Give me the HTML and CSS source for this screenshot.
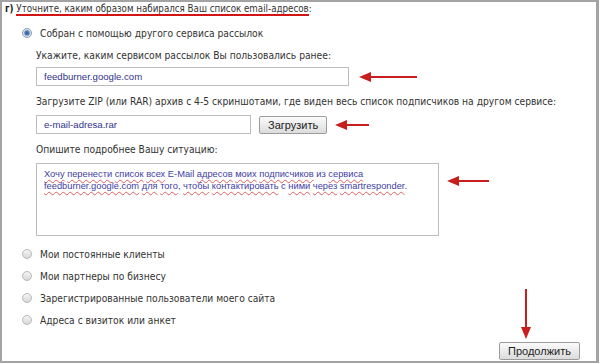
FILE: index.html
```html
<!DOCTYPE html>
<html lang="ru">
<head>
  <meta charset="UTF-8">
  <title>Список email-адресов</title>
  <link rel="stylesheet" href="styles.css">
</head>
<body>
  <div class="frame">
    <div class="title"><b>г)</b> <span class="marked">Уточните, каким образом набирался Ваш список email-адресов</span>:</div>

    <div class="option first"><span class="radio checked"></span>Собран с помощью другого сервиса рассылок</div>

    <div class="sub">
      <div class="label first">Укажите, каким сервисом рассылок Вы пользовались ранее:</div>
      <div class="row">
        <div class="field wide">feedburner.google.com</div>
        <svg class="arrow" width="58" height="12" viewBox="0 0 58 12"><path d="M10 5h48v2H10z M0 6l12-5v10z" fill="#c81e1e"/></svg>
      </div>

      <div class="label">Загрузите ZIP (или RAR) архив с 4-5 скриншотами, где виден весь список подписчиков на другом сервисе:</div>
      <div class="row">
        <div class="field short">e-mail-adresa.rar</div>
        <button class="btn">Загрузить</button>
        <svg class="arrow" width="34" height="12" viewBox="0 0 34 12"><path d="M10 5h24v2H10z M0 6l12-5v10z" fill="#c81e1e"/></svg>
      </div>

      <div class="label">Опишите подробнее Вашу ситуацию:</div>
      <div class="row top">
        <div class="area"><u>Хочу</u> <u>перенести</u> <u>список</u> <u>всех</u> E-Mail <u>адресов</u> <u>моих</u> <u>подписчиков</u> из <u>сервиса</u><br><u>feedburner.google.com</u> <u>для</u> <u>того</u>, <u>чтобы</u> <u>контактировать</u> с <u>ними</u> <u>через</u> <u>smartresponder</u>.</div>
        <svg class="arrow low" width="42" height="12" viewBox="0 0 42 12"><path d="M10 5h32v2H10z M0 6l12-5v10z" fill="#c81e1e"/></svg>
      </div>
    </div>

    <div class="options">
      <div class="option"><span class="radio"></span>Мои постоянные клиенты</div>
      <div class="option"><span class="radio"></span>Мои партнеры по бизнесу</div>
      <div class="option"><span class="radio"></span>Зарегистрированные пользователи моего сайта</div>
      <div class="option"><span class="radio"></span>Адреса с визиток или анкет</div>
    </div>

    <div class="footer">
      <svg class="down" width="12" height="50" viewBox="0 0 12 50"><path d="M5 0h2v40H5z M6 50L1 38h10z" fill="#c81e1e"/></svg>
      <button class="btn next">Продолжить</button>
    </div>
  </div>
</body>
</html>
```

FILE: styles.css
```css
body {
  margin: 0;
  background: #fff;
  font-family: "DejaVu Sans Condensed", "DejaVu Sans", Verdana, sans-serif;
  font-stretch: condensed;
  font-size: 10.2px;
  color: #333;
}
.frame {
  position: relative;
  width: 594px;
  height: 359px;
  border: 2px solid #a3a3a3;
  border-right-width: 3px;
}
.title {
  height: 13px;
  line-height: 13px;
  padding-left: 3px;
  font-size: 9.7px;
}
.title b {
  color: #222;
}
.marked {
  border-bottom: 2px solid #d21414;
}
.option {
  display: flex;
  align-items: center;
  height: 22px;
  padding-left: 20px;
}
.option.first {
  margin-top: 7px;
}
.options {
  margin-top: 7px;
}
.radio {
  width: 8px;
  height: 8px;
  border: 1px solid #b8b8b8;
  border-radius: 50%;
  background: linear-gradient(#f4f4f4, #d8d8d8);
  margin-right: 8px;
}
.radio.checked {
  border-color: #8a9bb0;
  background: radial-gradient(circle, #2f5f9c 0, #4f7bb0 35%, #dde3ea 62%);
}
.sub {
  padding-left: 34px;
}
.label {
  line-height: 14px;
  margin-top: 9px;
  margin-bottom: 6px;
}
.label.first {
  margin-top: 5px;
  margin-bottom: 4px;
}
.row {
  display: flex;
  align-items: center;
  gap: 8px;
}
.row.top {
  align-items: flex-start;
}
.field, .area {
  box-sizing: border-box;
  border: 1px solid #bdbdbd;
  background: #fff;
  font-family: "Liberation Sans", Arial, sans-serif;
  font-size: 9.6px;
  color: #34348a;
  padding-left: 7px;
}
.field {
  height: 19px;
  line-height: 17px;
}
.field.wide {
  width: 313px;
  margin-right: 2px;
}
.field.short {
  width: 215px;
}
.btn {
  height: 18px;
  padding: 0 8px;
  border: 1px solid #9c9c9c;
  border-radius: 2px;
  background: linear-gradient(#fbfbfb, #dcdcdc);
  font-family: "Liberation Sans", Arial, sans-serif;
  font-size: 11px;
  color: #222;
}
.area {
  width: 403px;
  height: 73px;
  padding: 4px 7px;
  font-size: 9.3px;
  line-height: 12px;
  color: #3e3ea4;
}
.area u {
  text-decoration: underline wavy #e06060;
  text-decoration-thickness: 1px;
  text-underline-offset: 2px;
}
.arrow.low {
  margin-top: 12px;
}
.footer {
  display: flex;
  justify-content: flex-end;
  margin-top: 11px;
  padding-right: 16px;
}
.down {
  position: absolute;
  left: 518px;
  top: 287px;
}
.btn.next {
  width: 81px;
}
```
